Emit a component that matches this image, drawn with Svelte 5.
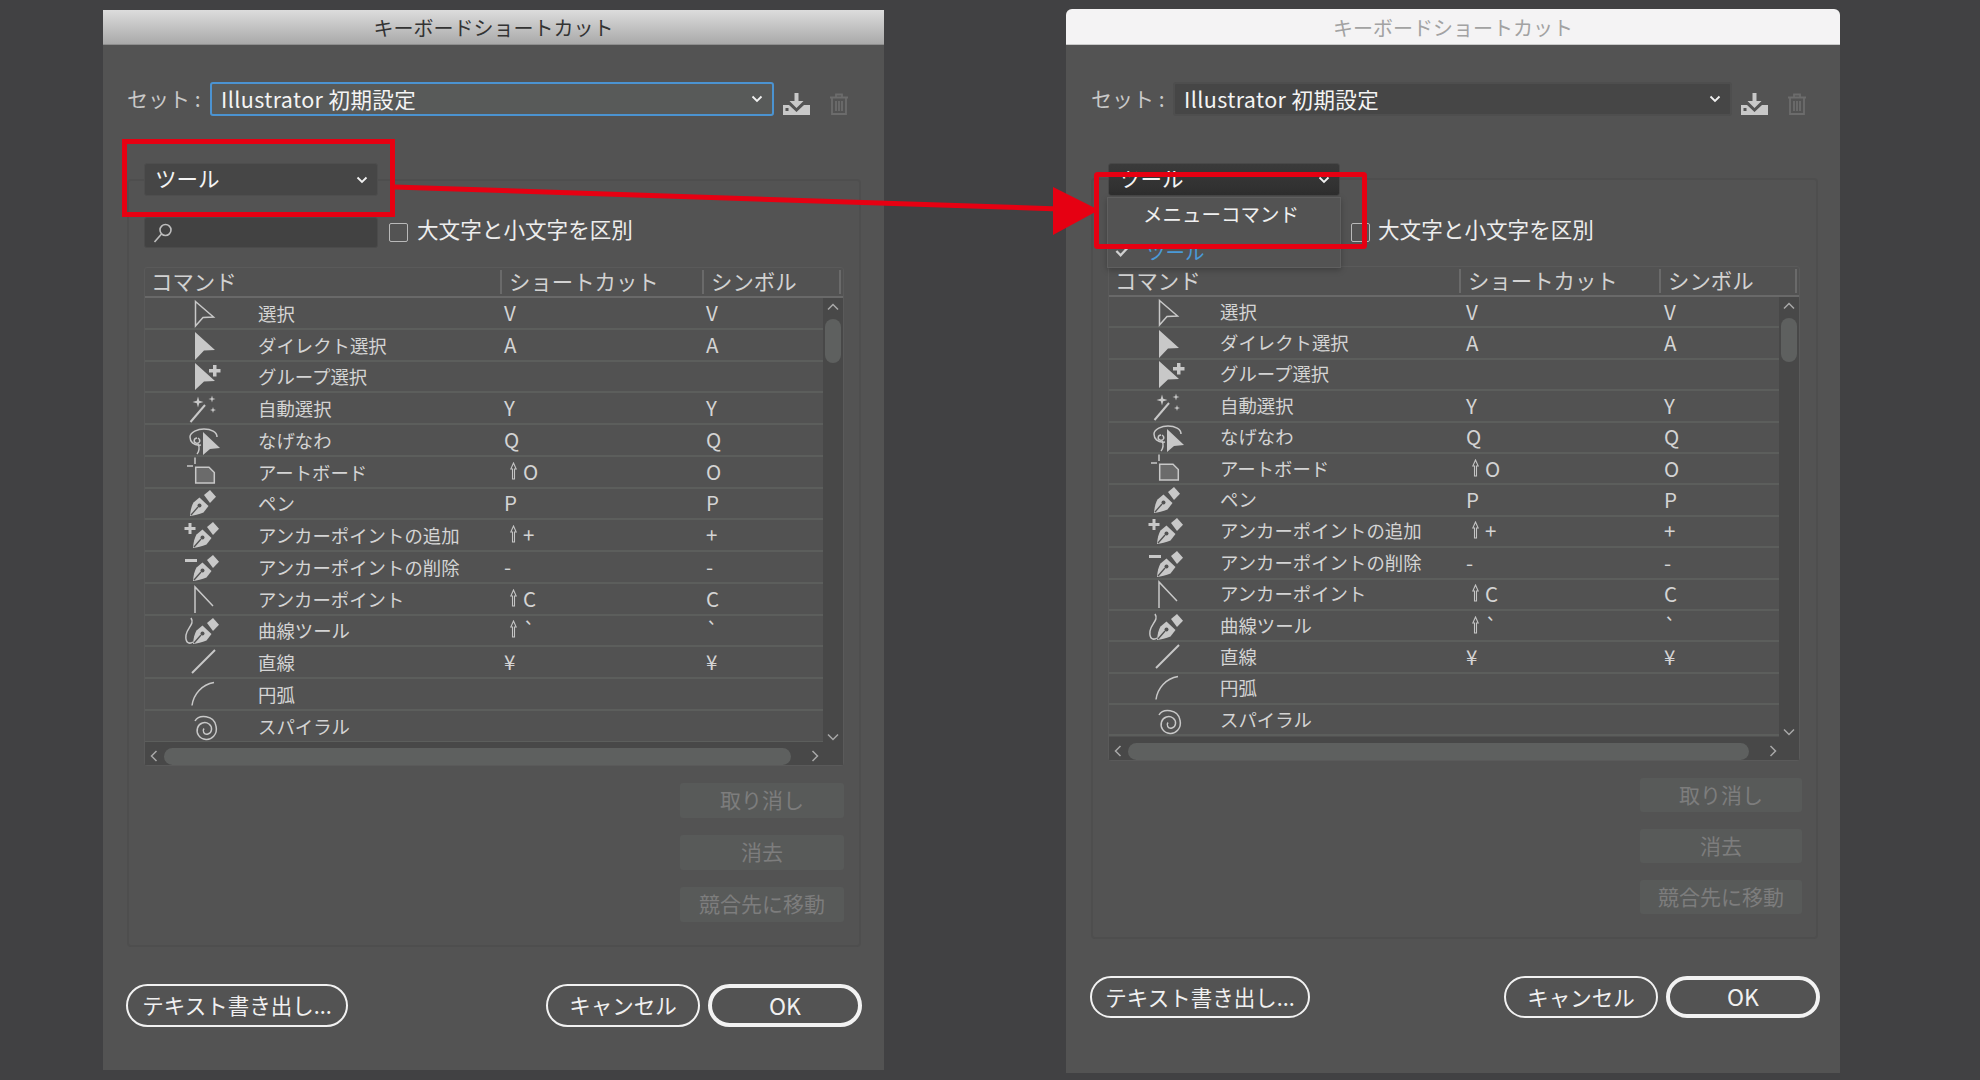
<script>
  // one row per tool; sc = shortcut, shift = shows the shift arrow, sym = symbol column
  const rows = [
    { icon: 'select', name: '選択', sc: 'V', sym: 'V' },
    { icon: 'direct', name: 'ダイレクト選択', sc: 'A', sym: 'A' },
    { icon: 'group', name: 'グループ選択', sc: '', sym: '' },
    { icon: 'wand', name: '自動選択', sc: 'Y', sym: 'Y' },
    { icon: 'lasso', name: 'なげなわ', sc: 'Q', sym: 'Q' },
    { icon: 'artboard', name: 'アートボード', sc: 'O', shift: true, sym: 'O' },
    { icon: 'pen', name: 'ペン', sc: 'P', sym: 'P' },
    { icon: 'penplus', name: 'アンカーポイントの追加', sc: '+', shift: true, sym: '+' },
    { icon: 'penminus', name: 'アンカーポイントの削除', sc: '-', sym: '-' },
    { icon: 'anchor', name: 'アンカーポイント', sc: 'C', shift: true, sym: 'C' },
    { icon: 'curve', name: '曲線ツール', sc: '`', shift: true, sym: '`' },
    { icon: 'line', name: '直線', sc: '¥', sym: '¥' },
    { icon: 'arc', name: '円弧', sc: '', sym: '' },
    { icon: 'spiral', name: 'スパイラル', sc: '', sym: '' }
  ];
</script>

{#snippet chevron(cls)}
  <svg class="chev {cls}" viewBox="0 0 12 8"><path d="M1.5 1.5 6 6l4.5-4.5" /></svg>
{/snippet}

{#snippet nib(x, y)}
  <g transform="translate({x} {y})">
    <path class="fill" d="M14 5 20 0l6 6.700L20 13z" />
    <path class="fill" d="M0 26C.5 20 1.500 16 3.500 12.500L9.500 7.500 18.500 16 13.500 22.500C9 24.500 4 25.500 0 26z" />
    <path class="cut" d="M1 25 8 17" />
    <circle class="hole" cx="9.500" cy="15.500" r="2" />
  </g>
{/snippet}

{#snippet toolIcon(name)}
  <svg class="tool" viewBox="0 0 36 30">
    {#if name === 'select'}
      <path class="line" d="M11.500 3.500 29.500 19 19 19.500 11.500 28z" />
    {:else if name === 'direct'}
      <path class="fill" d="M11 2 31 20 20 20.500 11 30z" />
    {:else if name === 'group'}
      <path class="fill" d="M11 2 31 20 20 20.500 11 29z" />
      <path class="fill" d="M29 4h3.500v4H36.500v3.500H32.500v4H29v-4H25V8h4z" />
    {:else if name === 'wand'}
      <path class="line wide" d="M6.500 29 21 12" />
      <path class="fill" d="M14 3.500l1.200 4.300 4.300 1.200-4.300 1.200L14 14.500l-1.200-4.300L8.500 9l4.300-1.200z" />
      <path class="fill" d="M28 2.500l.8 2.700 2.700.8-2.700.8-.8 2.700-.8-2.700-2.700-.8 2.700-.8z" />
      <path class="fill" d="M29 14l.7 2.300 2.300.7-2.300.7-.7 2.300-.7-2.300-2.300-.7 2.300-.7z" />
    {:else if name === 'lasso'}
      <path class="line" d="M17 20C9 21 6 16 6 12 6 7 14 4 20 4c7 0 13 3 13 8" />
      <path class="line" d="M13 13c-3 0-4 4-1 5 4 1 5-3 2-5M14 19c2 3 1 8-1 10" />
      <path class="fill" d="M19 7 36 23 26 24 19 30z" />
    {:else if name === 'artboard'}
      <path class="line" d="M11 .5V7M3 9H9" />
      <path class="doc" d="M11.700 10.200H25L30.300 15.500V26H11.700z" />
    {:else if name === 'pen'}
      {@render nib(6, 2)}
    {:else if name === 'penplus'}
      {@render nib(9, 2)}
      <path class="fill" d="M4.500 3h3v4h4v3h-4v4h-3v-4h-4V7h4z" />
    {:else if name === 'penminus'}
      {@render nib(9, 3)}
      <path class="fill" d="M1 7h12v3H1z" />
    {:else if name === 'anchor'}
      <path class="line" d="M11 29V3L29 22" />
    {:else if name === 'curve'}
      {@render nib(9, 3)}
      <path class="line" d="M7 3C11 9 3 13 2 20 1 29 6 29 9 27" />
    {:else if name === 'line'}
      <path class="line wide" d="M8 26 31 3" />
    {:else if name === 'arc'}
      <path class="line" d="M8 26.500C9.500 15 18 5.500 30 3.500" />
    {:else if name === 'spiral'}
      <path class="line" d="M11 10C15 3 30 4 32 15 34 24 27 29 22 28.500 15 28 12 22 13.500 17 15 12 21 10 25 13 29 16 28 22 24 23 20 24 18 20 20 17.500" />
    {/if}
  </svg>
{/snippet}

{#snippet dialog(side)}
  <section class="dialog {side}">
    <header class="titlebar">キーボードショートカット</header>
    <div class="body">
      <div class="setrow">
        <span class="setlabel">セット :</span>
        <div class="select setselect">
          <span class="setname">Illustrator 初期設定</span>
          {@render chevron('')}
        </div>
        <svg class="action" viewBox="0 0 27 22">
          <path class="fill" d="M11.500 0h4v8h5l-7 7-7-7h5z" />
          <path class="fill" d="M0 12h6l7.500 7L21 12h6v10H0z" />
          <rect class="hole" x="2.500" y="15" width="3" height="3" />
        </svg>
        <svg class="action trash" viewBox="0 0 20 22">
          <path class="dim" d="M1 4.500h18M7 4.500V1.500h6v3M3 4.500V21h14V4.500M7 8v10M10 8v10M13 8v10" />
        </svg>
      </div>

      <div class="group">
        <div class="toolpick">
          <div class="select toolselect">
            <span>ツール</span>
            {@render chevron('')}
          </div>
          {#if side === 'right'}
            <div class="menu">
              <div class="menuitem">メニューコマンド</div>
              <div class="menuitem current">
                <svg class="check" viewBox="0 0 16 12"><path d="M1.500 6 6 10.500 14.500 1.500" /></svg>
                ツール
              </div>
            </div>
          {/if}
        </div>

        <div class="searchrow">
          <div class="search">
            <svg viewBox="0 0 20 20"><circle cx="12.500" cy="7" r="5.500" /><path d="M8.500 11 1.500 19" /></svg>
          </div>
          <span class="checkbox"></span>
          <span class="casetext">大文字と小文字を区別</span>
        </div>

        <div class="table">
          <div class="thead">
            <span class="th first">コマンド</span>
            <span class="th second">ショートカット</span>
            <span class="th third">シンボル</span>
          </div>
          <div class="tbody">
            <div class="rows">
              {#each rows as row}
                <div class="row">
                  <span class="iconcell">{@render toolIcon(row.icon)}</span>
                  <span class="name">{row.name}</span>
                  <span class="sc">
                    {#if row.shift}
                      <svg class="shift" viewBox="0 0 7 18"><path d="M3.500 1 6.200 7H4.500V17H2.500V7H.8z" /></svg>
                    {/if}
                    {row.sc}
                  </span>
                  <span class="sym">{row.sym}</span>
                </div>
              {/each}
            </div>
            <div class="vscroll">
              <svg class="arrow" viewBox="0 0 12 8"><path d="M1 6.500 6 1.500l5 5" /></svg>
              <div class="vthumb"></div>
              <svg class="arrow down" viewBox="0 0 12 8"><path d="M1 1.500 6 6.500l5-5" /></svg>
            </div>
          </div>
          <div class="hscroll">
            <svg class="arrow side" viewBox="0 0 8 12"><path d="M6.500 1 1.500 6l5 5" /></svg>
            <div class="hthumb"></div>
            <svg class="arrow side" viewBox="0 0 8 12"><path d="M1.500 1 6.500 6l-5 5" /></svg>
          </div>
        </div>

        <div class="sidebuttons">
          <div class="dimbutton">取り消し</div>
          <div class="dimbutton">消去</div>
          <div class="dimbutton">競合先に移動</div>
        </div>
      </div>

      <footer class="footer">
        <div class="pill export">テキスト書き出し...</div>
        <div class="pill cancel">キャンセル</div>
        <div class="pill ok">OK</div>
      </footer>
    </div>
  </section>
{/snippet}

<main class="page">
  {@render dialog('left')}
  {@render dialog('right')}

  <!-- red annotation drawn on top of the screenshot -->
  <svg class="annotation" viewBox="0 0 1980 1080">
    <rect x="124.500" y="141.500" width="268" height="73" />
    <rect x="1096.500" y="174.500" width="268" height="72" rx="1" />
    <path d="M394 187 1060 209" />
    <polygon points="1053,187 1099,210 1053,235" />
  </svg>
</main>

<style>
  :global(body) {
    margin: 0;
    background: #414143;
  }

  .page {
    position: relative;
    width: 1980px;
    height: 1080px;
    overflow: hidden;
    display: flex;
    align-items: flex-start;
    padding-left: 103px;
    box-sizing: border-box;
    font-family: "Noto Sans CJK JP", "Liberation Sans", sans-serif;
    color: #e2e2e2;
  }

  .annotation {
    position: absolute;
    inset: 0;
    z-index: 5;
    width: 1980px;
    height: 1080px;
    pointer-events: none;
  }
  .annotation rect {
    fill: none;
    stroke: #e60012;
    stroke-width: 5;
  }
  .annotation path {
    fill: none;
    stroke: #e60012;
    stroke-width: 5;
  }
  .annotation polygon {
    fill: #e60012;
  }

  /* the two dialogs differ by a few pixels, so sizes live in variables */
  .dialog {
    --row-h: 31.75px;
    --name-gap: 38px;
    --sc-w: 202px;
    flex: none;
    box-sizing: border-box;
    background: #535353;
  }
  .dialog.left {
    width: 781px;
    height: 1060px;
    margin-top: 10px;
  }
  .dialog.right {
    --row-h: 31.4px;
    --name-gap: 36px;
    --sc-w: 198px;
    width: 774px;
    height: 1064px;
    margin-top: 9px;
    margin-left: 182px;
    border-radius: 6px 6px 0 0;
  }

  .titlebar {
    height: 34px;
    border-bottom: 1px solid #8e8e8e;
    display: flex;
    align-items: center;
    justify-content: center;
    font-size: 20px;
  }
  .left .titlebar {
    background: linear-gradient(#dcdcdc, #a9a9a9);
    color: #333;
  }
  .right .titlebar {
    height: 33px;
    padding-top: 2px;
    background: #f4f3f4;
    border-bottom-color: #c9c9c9;
    border-radius: 6px 6px 0 0;
    color: #a2a2a2;
  }

  .body {
    padding: 37px 22px 0 24px;
  }
  .right .body {
    padding-left: 25px;
    padding-right: 22px;
  }

  .setrow {
    display: flex;
    align-items: center;
    height: 34px;
  }
  .setlabel {
    width: 83px;
    flex: none;
    padding-bottom: 2px;
    font-size: 21px;
    color: #c9c9c9;
  }
  .right .setlabel {
    width: 82px;
  }

  .select {
    box-sizing: border-box;
    display: flex;
    align-items: center;
    justify-content: space-between;
    border-radius: 3px;
    color: #f4f4f4;
    font-size: 21.500px;
  }
  .setname {
    padding-bottom: 2px;
    letter-spacing: 0.4px;
  }
  .setselect {
    width: 564px;
    height: 34px;
    padding: 0 9px 0 9px;
    background: #585a59;
    border: 2px solid #4b93d1;
    flex: none;
  }
  .right .setselect {
    width: 559px;
    background: #464646;
    border-color: #4e4e4e;
  }

  .chev {
    width: 12px;
    height: 8px;
    fill: none;
    stroke: #f2f2f2;
    stroke-width: 1.800;
  }

  .action {
    width: 27px;
    height: 22px;
    margin: 10px 0 0 9px;
    flex: none;
  }
  .action.trash {
    width: 20px;
    margin-left: 19px;
  }
  .action .fill {
    fill: #c8c8c8;
  }
  .action .hole {
    fill: #535353;
  }
  .action .dim {
    fill: none;
    stroke: #6c6c6c;
    stroke-width: 1.800;
  }

  .group {
    box-sizing: border-box;
    width: 734px;
    height: 768px;
    margin-top: 63px;
    padding: 0 0 0 15px;
    border: 2px solid #4e4e4e;
    border-radius: 4px;
  }
  .right .group {
    width: 727px;
    height: 761px;
    margin-top: 62px;
  }

  .toolpick {
    position: relative;
    width: 234px;
    height: 33px;
    margin-top: -18px;
  }
  .right .toolpick {
    width: 232px;
    margin-top: -17px;
  }
  .toolselect {
    height: 33px;
    padding: 0 9px 4px 10px;
    background: #464646;
    border: 1px solid #4e4e4e;
  }
  .toolselect .chev {
    margin-top: 4px;
  }
  .right .toolselect {
    background: linear-gradient(#3a3a3a, #2e2e2e);
    border-color: #484848;
  }

  .menu {
    position: absolute;
    top: 34px;
    left: -1px;
    width: 234px;
    height: 71px;
    box-sizing: border-box;
    background: #535353;
    border: 1px solid #5f5f5f;
    box-shadow: 0 2px 6px rgba(0, 0, 0, 0.25);
    z-index: 2;
  }
  .menuitem {
    position: relative;
    box-sizing: border-box;
    height: 36px;
    padding: 0 0 5px 35px;
    display: flex;
    align-items: center;
    font-size: 19.500px;
    color: #f0f0f0;
  }
  .menuitem.current {
    padding: 0 0 2px 38px;
    color: #4a9ad8;
  }
  .check {
    position: absolute;
    left: 7px;
    top: 11px;
    width: 15px;
    height: 12px;
    fill: none;
    stroke: #d0d0d0;
    stroke-width: 2.500;
  }

  .searchrow {
    display: flex;
    align-items: center;
    height: 31px;
    margin-top: 21px;
  }
  .search {
    box-sizing: border-box;
    width: 234px;
    height: 31px;
    padding: 5px 0 0 8px;
    background: #424242;
    border: 1px solid #4b4b4b;
    border-radius: 3px;
    flex: none;
  }
  .right .search {
    width: 232px;
    background: #535353;
    border-color: #535353;
  }
  .search svg {
    width: 20px;
    height: 20px;
    display: block;
    fill: none;
    stroke: #bdbdbd;
    stroke-width: 1.600;
  }
  .checkbox {
    box-sizing: border-box;
    width: 19px;
    height: 19px;
    margin-left: 11px;
    border: 1.500px solid #b9b9b9;
    border-radius: 2px;
    flex: none;
  }
  .casetext {
    margin-left: 9px;
    padding-bottom: 8px;
    font-size: 21.600px;
    color: #ededed;
  }
  .right .casetext {
    margin-left: 8px;
    padding-bottom: 9px;
  }

  .table {
    box-sizing: border-box;
    width: 700px;
    height: 499px;
    margin-top: 19px;
    display: flex;
    flex-direction: column;
    background: #525252;
    border: 1px solid #5a5a5a;
    border-radius: 3px;
  }
  .right .table {
    width: 692px;
    height: 495px;
    margin-top: 18px;
  }

  .thead {
    height: 30px;
    flex: none;
    box-sizing: border-box;
    display: grid;
    grid-template-columns: 357px 202px 137px;
    align-items: center;
    border-bottom: 2px solid #696969;
    font-size: 21.400px;
    color: #d2d2d2;
  }
  .right .thead {
    grid-template-columns: 352px 200px 136px;
  }
  .th {
    height: 24px;
    line-height: 22px;
    padding-left: 6px;
    border-right: 2px solid #6a6a6a;
    box-sizing: border-box;
  }
  .th.second,
  .th.third {
    padding-left: 7px;
  }

  .tbody {
    display: flex;
    flex: 1;
    min-height: 0;
  }
  .rows {
    flex: 1;
    min-width: 0;
  }
  .row {
    box-sizing: border-box;
    height: var(--row-h);
    display: grid;
    grid-template-columns: 39px 36px var(--name-gap) 246px var(--sc-w) 1fr;
    grid-template-rows: 100%;
    align-items: center;
    border-bottom: 2px solid #5c5e5c;
    font-size: 18.400px;
    line-height: 24px;
    color: #d4d4d4;
  }
  .iconcell {
    grid-column: 2;
    height: 30px;
  }
  .name {
    grid-column: 4;
  }
  .right .name {
    padding-bottom: 2px;
  }
  .sc {
    grid-column: 5;
    display: flex;
    align-items: center;
    gap: 6px;
    padding-bottom: 2px;
    font-size: 20.500px;
  }
  .sym {
    grid-column: 6;
    padding-bottom: 2px;
    font-size: 20.500px;
  }
  .shift {
    width: 7px;
    height: 18px;
    margin-left: 6px;
    fill: none;
    stroke: #c4c4c4;
    stroke-width: 1.100;
  }

  .tool {
    display: block;
    width: 36px;
    height: 30px;
    overflow: visible;
  }
  .tool .line {
    fill: none;
    stroke: #c8c8c8;
    stroke-width: 1.500;
  }
  .tool .line.wide {
    stroke-width: 2;
  }
  .tool .fill {
    fill: #c8c8c8;
  }
  .tool .doc {
    fill: #6b6b6b;
    stroke: #c8c8c8;
    stroke-width: 1.500;
  }
  .tool .cut {
    fill: none;
    stroke: #525252;
    stroke-width: 1.300;
  }
  .tool .hole {
    fill: #525252;
  }

  .vscroll {
    width: 20px;
    flex: none;
    background: #484848;
    display: flex;
    flex-direction: column;
    align-items: center;
    box-sizing: border-box;
    padding-top: 5px;
  }
  .vthumb {
    width: 16px;
    height: 44px;
    margin-top: 8px;
    background: #5e605f;
    border-radius: 8px;
  }
  .arrow {
    width: 12px;
    height: 8px;
    flex: none;
    fill: none;
    stroke: #a8a8a8;
    stroke-width: 1.500;
  }
  .arrow.down {
    margin-top: auto;
    margin-bottom: 1px;
  }
  .arrow.side {
    width: 8px;
    height: 12px;
  }

  .hscroll {
    height: 23px;
    flex: none;
    box-sizing: border-box;
    display: flex;
    align-items: center;
    padding: 5px 25px 0 5px;
    background: #484848;
  }
  .hthumb {
    flex: none;
    width: 627px;
    height: 17px;
    margin: 0 20px 0 6px;
    background: #5e605f;
    border-radius: 9px;
  }
  .right .hthumb {
    width: 621px;
  }

  .sidebuttons {
    width: 700px;
    margin-top: 17px;
    display: flex;
    flex-direction: column;
    align-items: flex-end;
    gap: 17px;
  }
  .right .sidebuttons {
    width: 694px;
  }
  .dimbutton {
    box-sizing: border-box;
    width: 164px;
    height: 35px;
    padding-bottom: 3px;
    display: flex;
    align-items: center;
    justify-content: center;
    background: #585a59;
    border-radius: 3px;
    font-size: 21px;
    color: #7d7d7d;
  }
  .right .dimbutton {
    height: 34px;
    width: 162px;
  }

  .footer {
    display: flex;
    margin: 37px 0 0 -1px;
  }
  .pill {
    box-sizing: border-box;
    height: 43px;
    padding-bottom: 2px;
    display: flex;
    align-items: center;
    justify-content: center;
    border: 2px solid #f2f2f2;
    border-radius: 22px;
    font-size: 21.500px;
    color: #f0f0f0;
  }
  .export {
    width: 222px;
  }
  .cancel {
    width: 154px;
    margin-left: auto;
  }
  .ok {
    width: 154px;
    margin-left: 8px;
    border-width: 4px;
    font-size: 23px;
  }
  .left .footer {
    width: 736px;
  }
  .right .footer {
    width: 730px;
  }
  .right .export {
    width: 220px;
  }
  .right .pill {
    height: 42px;
  }
</style>
